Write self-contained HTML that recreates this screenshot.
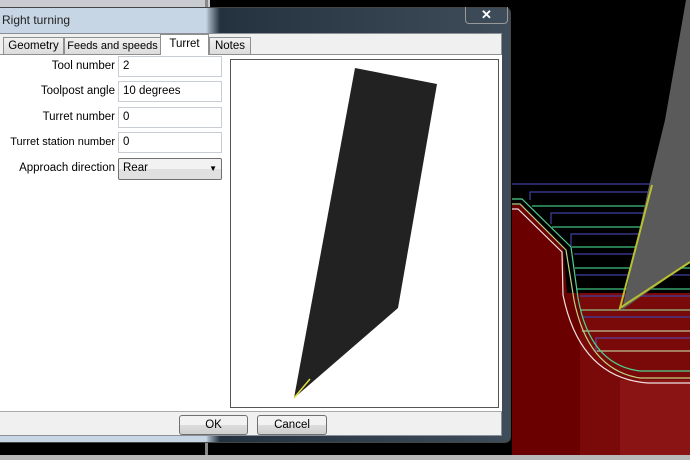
<!DOCTYPE html>
<html><head><style>
body{margin:0;width:690px;height:460px;overflow:hidden;position:relative;background:#000;font-family:"Liberation Sans",sans-serif;font-size:11.5px;color:#000}
.abs{position:absolute;white-space:nowrap}
.tab{position:absolute;top:37px;height:17px;border:1px solid #8e8f8f;border-bottom:none;background:linear-gradient(#f2f2f2,#dcdcdc);text-align:center;line-height:17px;box-sizing:border-box;white-space:nowrap;overflow:hidden}
.lbl{position:absolute;left:0;width:115px;text-align:right;white-space:nowrap}
.inp{position:absolute;left:118px;width:104px;height:21px;border:1px solid #c8cdd3;background:#fff;box-sizing:border-box;padding-left:4px;line-height:19px}
.btn{position:absolute;top:415px;height:20px;border:1px solid #707070;border-radius:3px;background:linear-gradient(#f2f2f2 50%,#dddddd 50%,#cfcfcf);text-align:center;line-height:18px;box-sizing:border-box}
</style></head><body>
<svg class="abs" style="left:0;top:0" width="690" height="460">
<rect x="0" y="0" width="210" height="7" fill="#c8ccd0"/>
<rect x="205" y="0" width="3" height="460" fill="#888"/>
<polygon points="512,205 522,205 563,248 567,293 690,293 690,455 512,455" fill="#6a0000"/>
<rect x="580" y="293" width="110" height="162" fill="#7a0a0a"/>
<rect x="620" y="380" width="70" height="75" fill="#8a1414"/>
<g stroke-width="1.2">
<line x1="512" y1="184" x2="690" y2="184" stroke="#4040a0"/>
<polyline points="530,200 530,192 690,192" fill="none" stroke="#4040a0"/>
<line x1="532" y1="206" x2="690" y2="206" stroke="#40c080"/>
<polyline points="551,224 551,213 690,213" fill="none" stroke="#4040a0"/>
<line x1="552" y1="227" x2="690" y2="227" stroke="#40c080"/>
<polyline points="571,247 571,234 690,234" fill="none" stroke="#4040a0"/>
<line x1="572" y1="247" x2="690" y2="247" stroke="#40c080"/>
<line x1="574" y1="254" x2="690" y2="254" stroke="#4040a0"/>
<line x1="575" y1="268" x2="690" y2="268" stroke="#40c080"/>
<line x1="576" y1="275" x2="690" y2="275" stroke="#4040a0"/>
<line x1="577" y1="289" x2="690" y2="289" stroke="#40c080"/>
<line x1="580" y1="296" x2="690" y2="296" stroke="#4040a0"/>
<line x1="580" y1="310" x2="690" y2="310" stroke="#90c080"/>
<line x1="582" y1="317" x2="690" y2="317" stroke="#4040a0"/>
<line x1="582" y1="331" x2="690" y2="331" stroke="#c0c090"/>
<polyline points="596,352 596,338 690,338" fill="none" stroke="#6040a0"/>
<line x1="597" y1="351" x2="690" y2="351" stroke="#c0c090"/>
</g>
<path d="M512,199 L522,199 L571,247 L578,298 Q590,365 640,371 L690,371" fill="none" stroke="#50d090" stroke-width="1.2"/>
<path d="M512,204 L520,204 L566,250 L574,300 Q588,370 640,378 L690,378" fill="none" stroke="#c0d080" stroke-width="1.2"/>
<path d="M512,209 L518,209 L562,252 L563,295 Q580,378 648,383 L690,383" fill="none" stroke="#f0e0e0" stroke-width="1.2"/>
<polygon points="686,0 690,0 690,262 622,310 648,190 665,120" fill="#5a5a5a"/>
<polyline points="652,185 620,308 690,262" fill="none" stroke="#b8c030" stroke-width="2"/>
<rect x="0" y="455" width="690" height="5" fill="#b8b8b8"/>
</svg>
<div class="abs" style="left:0;top:7px;width:511px;height:436px;border-radius:0 6px 6px 0;background:linear-gradient(90deg,rgba(210,225,240,0.95) 0,rgba(210,225,240,0.95) 205px,rgba(40,55,70,0.9) 220px,rgba(70,85,100,0.9) 100%);border:1px solid #444;border-left:none;box-sizing:border-box"></div>
<div class="abs" style="left:465px;top:7px;width:43px;height:17px;border:1px solid #999;border-top:none;border-radius:0 0 4px 4px;color:#fff;text-align:center;font-weight:bold;font-size:13px;line-height:15px;box-sizing:border-box">✕</div>
<div class="abs" style="left:2px;top:13px;font-size:12px;color:#222">Right turning</div>
<div class="abs" style="left:0;top:33px;width:502px;height:403px;background:#f0f0f0;border:1px solid #8a9096;border-left:none;box-sizing:border-box"></div>
<div class="abs" style="left:0;top:54px;width:502px;height:358px;background:#fff;border-top:1px solid #8e8f8f;border-bottom:1px solid #aaa;box-sizing:border-box"></div>
<div class="tab" style="left:3px;width:61px">Geometry</div>
<div class="tab" style="left:64px;width:97px;font-size:11px">Feeds and speeds</div>
<div class="tab" style="left:160px;top:34px;height:21px;width:49px;background:#fff;line-height:19px">Turret</div>
<div class="tab" style="left:209px;width:42px">Notes</div>
<div class="abs" style="left:0;top:56px;width:230px;height:130px">
<div class="lbl" style="top:4px">Tool number</div><div class="inp" style="top:0">2</div>
<div class="lbl" style="top:29px">Toolpost angle</div><div class="inp" style="top:25px">10 degrees</div>
<div class="lbl" style="top:55px">Turret number</div><div class="inp" style="top:51px">0</div>
<div class="lbl" style="top:80px;font-size:11px">Turret station number</div><div class="inp" style="top:76px">0</div>
<div class="lbl" style="top:106px">Approach direction</div>
<div class="inp" style="top:102px;height:22px;border-color:#707070;border-radius:2px;background:linear-gradient(#f2f2f2 50%,#e0e0e0 50%)">Rear<span style="position:absolute;right:4px;top:0;font-size:8px">▼</span></div>
</div>
<svg class="abs" style="left:230px;top:59px" width="269" height="349">
<rect x="0.5" y="0.5" width="268" height="348" fill="#fff" stroke="#555"/>
<polygon points="125,9 207,25 168,249 64,339" fill="#222"/>
<line x1="64" y1="339" x2="80" y2="320" stroke="#e0e040" stroke-width="1.5"/>
</svg>
<div class="btn" style="left:179px;width:69px">OK</div>
<div class="btn" style="left:257px;width:70px">Cancel</div>
</body></html>
